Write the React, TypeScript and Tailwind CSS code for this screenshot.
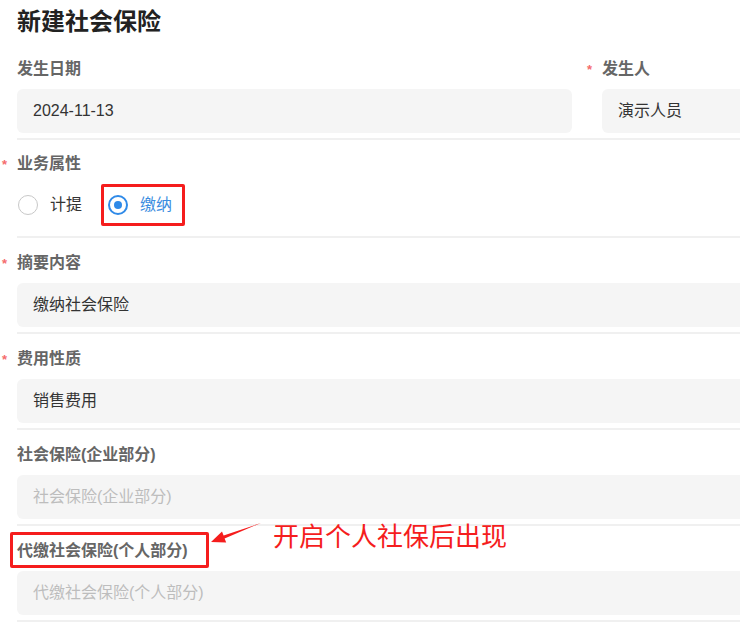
import React from "react";

const FONT = "font-['Liberation_Sans','Noto_Sans_CJK_SC',sans-serif]";

const Req = () => (
    <span className="absolute -left-[15px] top-[1px] text-[13px] leading-[24px] text-[#f56c6c]">*</span>
);

const Label = ({ text, required }: { text: string; required?: boolean }) => (
    <div className="relative h-6 text-[16px] leading-[24px] font-bold text-[#666]">
        {required && <Req />}
        {text}
    </div>
);

const Field = ({ value, placeholder }: { value?: string; placeholder?: string }) => (
    <div className="flex h-11 items-center rounded-[6px] bg-[#f5f5f5] px-4 text-[16px]">
        {value ? (
            <span className="text-[#333]">{value}</span>
        ) : (
            <span className="text-[#bdbdbd]">{placeholder}</span>
        )}
    </div>
);

const Section = ({
    label,
    required,
    value,
    placeholder,
    boxed,
}: {
    label: string;
    required?: boolean;
    value?: string;
    placeholder?: string;
    boxed?: boolean;
}) => (
    <div className="border-b-2 border-[#f0f0f0] pt-[13px] pb-[5px]">
        <div className="relative">
            <Label text={label} required={required} />
            {boxed && (
                <div className="pointer-events-none absolute -top-[7px] -left-[7px] h-[36px] w-[199px] rounded-[2px] border-[3px] border-[#f51d1d]" />
            )}
        </div>
        <div className="mt-2">
            <Field value={value} placeholder={placeholder} />
        </div>
    </div>
);

const Radio = ({ label, checked }: { label: string; checked?: boolean }) => (
    <span className="flex items-center gap-3">
        {checked ? (
            <span className="flex h-5 w-5 items-center justify-center rounded-full border-2 border-[#2f8ae8]">
                <span className="h-2 w-2 rounded-full bg-[#2f8ae8]" />
            </span>
        ) : (
            <span className="h-5 w-5 rounded-full border-[1.5px] border-[#c8c8c8]" />
        )}
        <span className={`text-[16px] ${checked ? "text-[#3b8de0]" : "text-[#333]"}`}>{label}</span>
    </span>
);

export default function App() {
    return (
        <div className={`relative h-[627px] w-[740px] overflow-hidden bg-white ${FONT}`}>
            <div className="w-[900px] pl-[17px] pt-[6px]">
                {/* title */}
                <h1 className="text-[24px] leading-[32px] font-bold text-[#222]">新建社会保险</h1>

                {/* date / person */}
                <div className="mt-[19px] flex gap-[30px] border-b-2 border-[#f0f0f0] pb-[5px]">
                    <div className="w-[555px]">
                        <Label text="发生日期" />
                        <div className="mt-2">
                            <Field value="2024-11-13" />
                        </div>
                    </div>
                    <div className="flex-1">
                        <Label text="发生人" required />
                        <div className="mt-2">
                            <Field value="演示人员" />
                        </div>
                    </div>
                </div>

                {/* business type */}
                <div className="border-b-2 border-[#f0f0f0] pt-[12px] pb-[13px]">
                    <Label text="业务属性" required />
                    <div className="mt-[11px] flex h-9 items-center gap-[26px] pl-[1px]">
                        <Radio label="计提" />
                        <span className="relative">
                            <Radio label="缴纳" checked />
                            <span className="pointer-events-none absolute -top-[9px] -bottom-[9px] -left-[7px] -right-[13px] rounded-[2px] border-[3px] border-[#f51d1d]" />
                        </span>
                    </div>
                </div>

                <Section label="摘要内容" required value="缴纳社会保险" />
                <Section label="费用性质" required value="销售费用" />
                <Section label="社会保险(企业部分)" placeholder="社会保险(企业部分)" />
                <Section label="代缴社会保险(个人部分)" placeholder="代缴社会保险(个人部分)" boxed />
            </div>

            {/* annotation */}
            <svg className="absolute left-0 top-0" width="740" height="627" viewBox="0 0 740 627">
                <polygon
                    points="211,542 222,531.4 223.6,535.6 261,523 224.6,538.4 226.2,542.6"
                    fill="#f51d1d"
                />
            </svg>
            <div className="absolute left-[273px] top-[519px] text-[26px] leading-[36px] text-[#f51d1d]">
                开启个人社保后出现
            </div>
        </div>
    );
}
